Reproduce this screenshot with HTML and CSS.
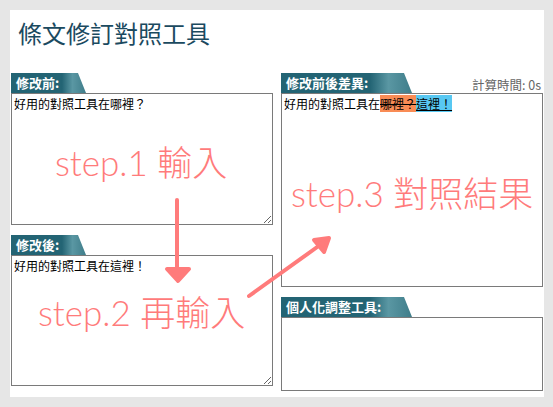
FILE: index.html
```
<!DOCTYPE html>
<html lang="zh-Hant">

<head>
    <meta charset="UTF-8">
    <meta name="viewport" content="width=device-width, initial-scale=1.0">
    <title>條文修訂對照工具</title>
    <link rel="stylesheet" href="styles.css">
</head>

<body>
    <div class="page">
        <h1>條文修訂對照工具</h1>

        <div class="columns">
            <!-- Left column: inputs -->
            <div class="column">
                <div class="tab tab-short">修改前:</div>
                <textarea class="box box-before" readonly>好用的對照工具在哪裡？</textarea>

                <div class="tab tab-short">修改後:</div>
                <textarea class="box box-after" readonly>好用的對照工具在這裡！</textarea>
            </div>

            <!-- Right column: result -->
            <div class="column">
                <div class="tab-row">
                    <div class="tab tab-long">修改前後差異:</div>
                    <span class="timer">計算時間: 0s</span>
                </div>
                <div class="box box-diff">好用的對照工具在<del>哪裡？</del><ins>這裡！</ins></div>

                <div class="tab tab-long">個人化調整工具:</div>
                <div class="box box-tools"></div>
            </div>
        </div>
    </div>

    <!-- Annotations drawn over the page -->
    <div class="note note-1">step.1 輸入</div>
    <div class="note note-2">step.2 再輸入</div>
    <div class="note note-3">step.3 對照結果</div>

    <svg class="arrows" width="553" height="407" viewBox="0 0 553 407">
        <g stroke="#ff7b7b" stroke-width="4" stroke-linecap="round" stroke-linejoin="round" fill="#ff7b7b">
            <line x1="177" y1="200" x2="177" y2="270" />
            <polygon points="167,269 189,269 178,281" />
            <line x1="249" y1="296" x2="320" y2="245" />
            <polygon points="314,240 329,238 324,252" />
        </g>
    </svg>
</body>

</html>
```

FILE: styles.css
```
body {
    margin: 0;
    background-color: #e6e6e6;
    font-family: "Noto Sans CJK TC", "DejaVu Sans", sans-serif;
}

.page {
    width: 534px;
    height: 387px;
    margin: 10px 0 0 10px;
    padding: 0 1px;
    box-sizing: border-box;
    background-color: #fff;
}

h1 {
    margin: 0;
    padding: 6px 0 0 7px;
    height: 57px;
    font-size: 24px;
    font-weight: normal;
    line-height: 34px;
    color: #1b4a5f;
}

.columns {
    display: flex;
    gap: 8px;
}

.column {
    width: 262px;
    display: flex;
    flex-direction: column;
}

.tab-row {
    display: flex;
    justify-content: space-between;
    align-items: flex-end;
}

.tab {
    height: 20px;
    padding-left: 5px;
    box-sizing: border-box;
    font-size: 13px;
    font-weight: bold;
    line-height: 20px;
    color: #fff;
    background: linear-gradient(to right, #236474 0%, #236474 68%, #5a97a3 82%, #3f7d8a 100%);
    clip-path: polygon(0 0, calc(100% - 8px) 0, 100% 100%, 0 100%);
}

.tab-short {
    width: 75px;
}

.tab-long {
    width: 131px;
}

.timer {
    font-size: 12.5px;
    line-height: 16px;
    color: #666;
    padding-right: 2px;
}

.box {
    display: block;
    box-sizing: border-box;
    width: 262px;
    margin: 0;
    padding: 2px 2px;
    border: 1px solid #7a7a7a;
    font-family: "Noto Sans CJK TC", "DejaVu Sans", sans-serif;
    font-size: 12px;
    line-height: 16px;
    color: #000;
    background-color: #fff;
}

.box-before {
    height: 132px;
    margin-bottom: 10px;
}

.box-after {
    height: 131px;
}

.box-diff {
    height: 194px;
    margin-bottom: 10px;
}

.box-tools {
    height: 74px;
}

del {
    background-color: #f98c55;
}

ins {
    background-color: #58c8f2;
    text-decoration: underline;
}

.note {
    position: absolute;
    font-family: "Lato", "Noto Sans CJK TC", sans-serif;
    font-weight: 300;
    font-size: 35px;
    line-height: 40px;
    color: #ff7b7b;
    white-space: nowrap;
}

.note-1 {
    left: 55px;
    top: 142px;
}

.note-2 {
    left: 38px;
    top: 292px;
}

.note-3 {
    left: 291px;
    top: 173px;
}

.arrows {
    position: absolute;
    left: 0;
    top: 0;
    pointer-events: none;
}
```
